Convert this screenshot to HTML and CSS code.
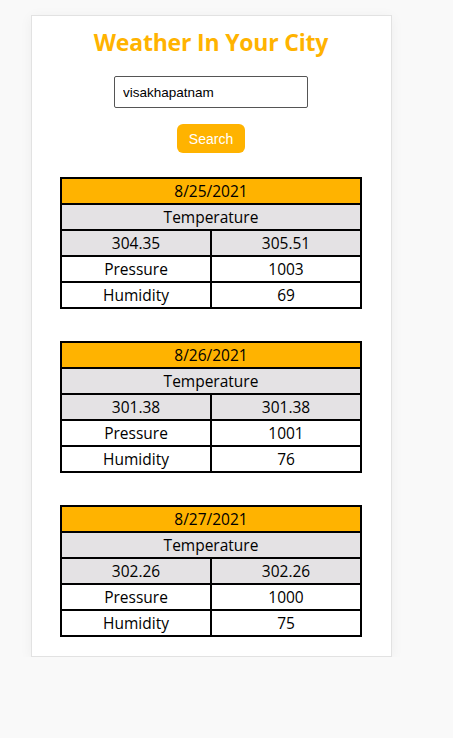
FILE: index.html
```html
<!DOCTYPE html>
<html>
<head>
<meta charset="utf-8">
<link rel="stylesheet" href="styles.css">
</head>
<body>
<div class="card">
  <h1 class="title">Weather In Your City</h1>
  <div class="form">
    <input class="city" type="text" value="visakhapatnam">
    <button class="search">Search</button>
  </div>
  <div class="tables">
    <table class="day">
      <tr><th colspan="2" class="date">8/25/2021</th></tr>
      <tr><td colspan="2" class="temp">Temperature</td></tr>
      <tr class="temp"><td>304.35</td><td>305.51</td></tr>
      <tr><td>Pressure</td><td>1003</td></tr>
      <tr><td>Humidity</td><td>69</td></tr>
    </table>
    <table class="day">
      <tr><th colspan="2" class="date">8/26/2021</th></tr>
      <tr><td colspan="2" class="temp">Temperature</td></tr>
      <tr class="temp"><td>301.38</td><td>301.38</td></tr>
      <tr><td>Pressure</td><td>1001</td></tr>
      <tr><td>Humidity</td><td>76</td></tr>
    </table>
    <table class="day">
      <tr><th colspan="2" class="date">8/27/2021</th></tr>
      <tr><td colspan="2" class="temp">Temperature</td></tr>
      <tr class="temp"><td>302.26</td><td>302.26</td></tr>
      <tr><td>Pressure</td><td>1000</td></tr>
      <tr><td>Humidity</td><td>75</td></tr>
    </table>
  </div>
</div>
</body>
</html>
```
FILE: styles.css
```css
html, body {
  margin: 0;
  padding: 0;
  background: #f9f9f9;
  font-family: "Open Sans", "Noto Sans", sans-serif;
}
.card {
  box-sizing: border-box;
  width: 361px;
  margin: 15px 0 0 31px;
  background: #fff;
  border: 1px solid #e2e2e2;
  box-shadow: 0 2px 12px rgba(0,0,0,0.05);
  padding: 11px 1px 19px 0;
}
.title {
  margin: 0;
  text-align: center;
  color: #ffb300;
  font-size: 23px;
  font-weight: 700;
  line-height: 30px;
  letter-spacing: -0.2px;
}
.form {
  display: flex;
  flex-direction: column;
  align-items: center;
  gap: 16px;
  margin-top: 19px;
}
.city {
  box-sizing: border-box;
  width: 194px;
  height: 32px;
  border: 1px solid #555;
  border-radius: 2px;
  padding: 0 8px;
  font-family: "Liberation Sans", Arial, sans-serif;
  font-size: 13.5px;
  color: #000;
}
.search {
  box-sizing: border-box;
  width: 68px;
  height: 29px;
  border: none;
  border-radius: 6px;
  background: #ffb300;
  color: #fff;
  font-family: "Liberation Sans", Arial, sans-serif;
  font-size: 14px;
  padding: 0;
}
.tables {
  display: flex;
  flex-direction: column;
  align-items: center;
  gap: 32px;
  margin-top: 24px;
}
.day {
  width: 302px;
  border-collapse: collapse;
  border: 2px solid #000;
  font-size: 15.5px;
  color: #000;
  table-layout: fixed;
}
.day th, .day td {
  border: 2px solid #000;
  height: 24px;
  padding: 0;
  text-align: center;
  font-weight: 400;
  line-height: 24px;
}
.date {
  background: #ffb300;
}
.temp, .temp td {
  background: #e4e2e4;
}
```
